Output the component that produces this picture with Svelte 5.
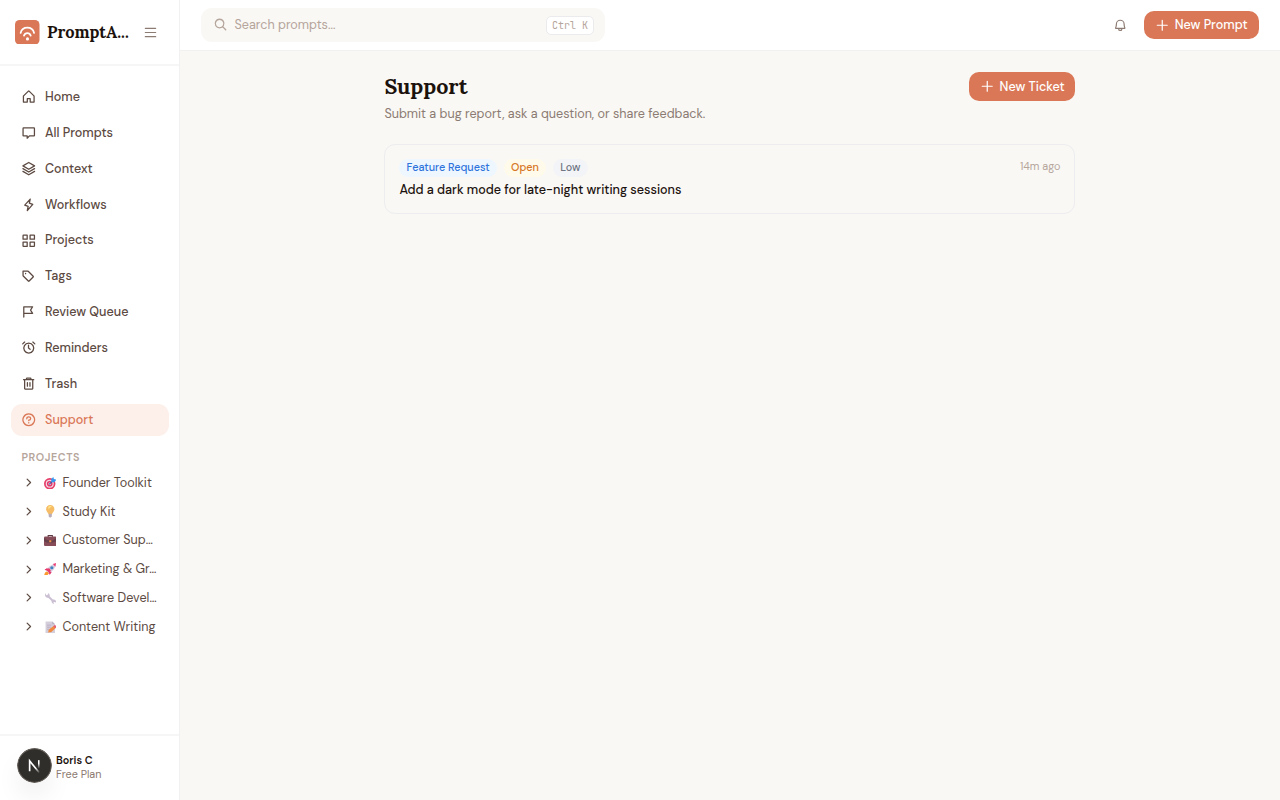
<script>
const nav = [
  { id: 'home', label: 'Home' },
  { id: 'prompts', label: 'All Prompts' },
  { id: 'context', label: 'Context' },
  { id: 'workflows', label: 'Workflows' },
  { id: 'projects', label: 'Projects' },
  { id: 'tags', label: 'Tags' },
  { id: 'review', label: 'Review Queue' },
  { id: 'reminders', label: 'Reminders' },
  { id: 'trash', label: 'Trash' },
  { id: 'support', label: 'Support' }
]

const projects = [
  { icon: 'target', name: 'Founder Toolkit' },
  { icon: 'bulb', name: 'Study Kit' },
  { icon: 'case', name: 'Customer Sup…' },
  { icon: 'rocket', name: 'Marketing & Gr…' },
  { icon: 'wrench', name: 'Software Devel…' },
  { icon: 'memo', name: 'Content Writing' }
]

// 256 grid
const icons = {
  home: 'M152 216v-56h-48v56H40v-96a8 8 0 0 1 2.3-5.7l80-80a8 8 0 0 1 11.4 0l80 80A8 8 0 0 1 216 120v96Z',
  prompts: 'M214 48H42a8 8 0 0 0-8 8v116a8 8 0 0 0 8 8h60v38l38-38h74a8 8 0 0 0 8-8V56a8 8 0 0 0-8-8Z',
  context: 'M32 80l96 56 96-56-96-56ZM32 126l96 56 96-56M32 172l96 56 96-56',
  workflows: 'M104 224l14-68-56-22L152 34l-14 66 56 22Z',
  projects: 'M42 34h60v68H34V42a8 8 0 0 1 8-8ZM150 34h64a8 8 0 0 1 8 8v60h-72ZM34 150h68v72H42a8 8 0 0 1-8-8ZM150 150h72v64a8 8 0 0 1-8 8h-64Z',
  tags: 'M36 34h76a10 10 0 0 1 7 3l82 82a10 10 0 0 1 0 14l-66 66a10 10 0 0 1-14 0l-84-84a10 10 0 0 1-3-7V36ZM76 74v4',
  review: 'M46 216V46h146l-34 54 34 54H46',
  reminders: 'M128 52a82 82 0 1 0 .1 0ZM124 84v50l26 20M60 34L28 64M196 34l32 30',
  trash: 'M210 60H42M106 108v60M148 108v60M194 60v148a8 8 0 0 1-8 8H68a8 8 0 0 1-8-8V60M164 56V46a10 10 0 0 0-10-10h-54a10 10 0 0 0-10 10v10',
  support: 'M128 32a96 96 0 1 0 .1 0ZM128 144v-8c17.7 0 32-12.5 32-28s-14.3-28-32-28-32 12.5-32 28v4M128 174v6',
  menu: 'M40 56h176M40 128h176M40 200h176',
  search: 'M116 40a76 76 0 1 0 .1 0ZM170 170l54 54',
  bell: 'M60 108a68 68 0 0 1 136 0c0 34 6 52 13 64a8 8 0 0 1-7 12H54a8 8 0 0 1-7-12c7-12 13-30 13-64ZM100 186v6a28 28 0 0 0 56 0v-6',
  plus: 'M40 128h176M128 40v176',
  chevron: 'M96 48l80 80-80 80'
}
</script>

{#snippet icon(name)}
  <svg class="icon icon-{name}" viewBox="0 0 256 256"><path d={icons[name]} /></svg>
{/snippet}

{#snippet emoji(name)}
  <svg class="emoji" viewBox="0 0 24 24">
    {#if name === 'target'}
      <circle cx="11" cy="13" r="11" fill="#e63e68" />
      <circle cx="11" cy="13" r="7.7" fill="#f3d8e4" />
      <circle cx="11" cy="13" r="5.4" fill="#df386a" />
      <circle cx="11" cy="13" r="2.5" fill="#f4dce5" />
      <path d="M10 14L19 5" stroke="#345aa5" stroke-width="2" />
      <path d="M14 9V4l4-4 1 4 5 1-4 5h-5Z" fill="#3898ee" />
    {:else if name === 'bulb'}
      <path d="M12 0C7 0 4 3.5 4 8c0 5 4 6 5 10h6c1-4 5-5 5-10 0-4.500-3-8-8-8Z" fill="#f6bd66" />
      <path d="M8 4c2-3 6-2 7 0-3 0-5 2-6 5Z" fill="#ffe58a" />
      <path d="M9 17h6v5l-2 2h-2l-2-2Z" fill="#b9adb8" />
    {:else if name === 'case'}
      <path d="M8 6V3h8v3" fill="none" stroke="#5d3944" stroke-width="2" />
      <rect x="0" y="5" width="24" height="18" rx="2" fill="#864c58" />
      <path d="M0 7q12 12 24 0v7q-12 6-24 0Z" fill="#66404b" />
      <rect x="10" y="12" width="4" height="4" rx="1" fill="#f39545" />
    {:else if name === 'rocket'}
      <path d="M7 9L1 13l5 2M15 17l-4 6-2-6" fill="#df2960" />
      <path d="M6 16l4 3-3 4-7 1 2-6Z" fill="#f99b32" />
      <path d="M5 15C7 8 13 3 22 2c0 8-5 14-13 17Z" fill="#d4cce0" />
      <path d="M17 2l6-2-1 7Z" fill="#ed3a6e" />
      <circle cx="15" cy="9" r="3" fill="#3f81bc" />
      <path d="M3 12l7-2 3 4-2 7-3-4Z" fill="#e83b6b" />
    {:else if name === 'wrench'}
      <path d="M7 7l11 11" stroke="#cbc0d3" stroke-width="4" />
      <path d="M3 2l1 4 4-1V2c4 2 4 7 0 9-4 1-8-3-5-9ZM16 15c4-2 8 1 7 5l-3-1-2 1 1 3c-4-1-6-5-3-8Z" fill="#cbc0d3" />
    {:else}
      <path d="M3 1h13l5 5v17H3Z" fill="#d4cdda" />
      <path d="M16 1v5h5" fill="#b7acc0" />
      <path d="M6 8h8M6 12h7M6 16h4" stroke="#b3a9bf" stroke-width="1.500" />
      <path d="M8 22l1-5 10-8 4 4-9 8Z" fill="#f18a40" />
      <path d="M18 10l3-3 3 4-2 3Z" fill="#e35e78" />
    {/if}
  </svg>
{/snippet}

<div class="app">
  <aside>
    <div class="brand">
      <svg class="logo" viewBox="0 0 24 24">
        <rect width="24" height="24" rx="4.500" fill="#da7756" />
        <path d="M5.500 12.700a6.800 6.800 0 0 1 13.200 0M8.800 15.300a3.500 3.500 0 0 1 6.600 0" fill="none" stroke="#fff" stroke-width="1.700" stroke-linecap="round" />
        <circle cx="12.200" cy="18.500" r="1.500" fill="#fff" />
      </svg>
      <strong>PromptA...</strong>
      <button class="plain" aria-label="Collapse">{@render icon('menu')}</button>
    </div>

    <nav>
      {#each nav as item}
        <a href="#{item.id}" class="item" class:active={item.id === 'support'}>
          {@render icon(item.id)}
          <span>{item.label}</span>
        </a>
      {/each}
    </nav>

    <div class="projects-list">
      <h2>PROJECTS</h2>
      {#each projects as project}
        <div class="project">
          {@render icon('chevron')}
          {@render emoji(project.icon)}
          <span>{project.name}</span>
        </div>
      {/each}
    </div>

    <div class="account">
      <svg class="avatar" viewBox="0 0 36 36">
        <defs>
          <linearGradient id="stem" x1="0" y1="0" x2="0" y2="1">
            <stop offset="0.400" stop-color="#fff" /><stop offset="1" stop-color="#fff" stop-opacity="0" />
          </linearGradient>
          <linearGradient id="slash" x1="0" y1="0" x2="1" y2="1">
            <stop offset="0.600" stop-color="#fff" /><stop offset="1" stop-color="#fff" stop-opacity="0.100" />
          </linearGradient>
        </defs>
        <circle cx="18" cy="18" r="17.300" fill="#302e2b" stroke="#625c56" stroke-width="1.200" />
        <path d="M13 24V13.300l9.800 12" fill="none" stroke="url(#slash)" stroke-width="1.700" />
        <rect x="21.600" y="12.500" width="1.600" height="8.500" fill="url(#stem)" />
      </svg>
      <div class="who">
        <b>Boris C</b>
        <span>Free Plan</span>
      </div>
    </div>
  </aside>

  <div class="page">
    <header>
      <div class="search">
        {@render icon('search')}
        <span>Search prompts...</span>
        <kbd>Ctrl K</kbd>
      </div>
      <button class="plain bell-btn" aria-label="Notifications">{@render icon('bell')}</button>
      <button class="primary">{@render icon('plus')}<span>New Prompt</span></button>
    </header>

    <main>
      <div class="heading">
        <div>
          <h1>Support</h1>
          <p>Submit a bug report, ask a question, or share feedback.</p>
        </div>
        <button class="primary ticket-btn">{@render icon('plus')}<span>New Ticket</span></button>
      </div>
      <article>
        <div class="meta">
          <span class="tag blue">Feature Request</span>
          <span class="tag amber">Open</span>
          <span class="tag grey">Low</span>
          <time>14m ago</time>
        </div>
        <h3>Add a dark mode for late-night writing sessions</h3>
      </article>
    </main>
  </div>
</div>

<style>
:global(body) {
  margin: 0;
  background: #f9f8f5;
}

.app {
  display: flex;
  height: 800px;
  overflow: hidden;
  font-family: 'DM Sans', Inter, 'Liberation Sans', sans-serif;
  font-size: 12.6px;
  color: #5c4a42;
}

.app * {
  box-sizing: border-box;
}

h1, h2, h3, p {
  margin: 0;
}

.icon {
  flex: none;
  width: 16px;
  height: 16px;
  fill: none;
  stroke: currentColor;
  stroke-width: 21;
  stroke-linecap: round;
  stroke-linejoin: round;
}

.plain {
  display: flex;
  padding: 0;
  border: 0;
  background: none;
  color: #8c7b72;
}

aside {
  display: flex;
  flex-direction: column;
  flex: none;
  width: 180px;
  background: #fff;
  border-right: 1px solid #f1f1f2;
}

.brand {
  display: flex;
  align-items: center;
  height: 66px;
  padding: 0 21px 0 15px;
  border-bottom: 2px solid #f6f6f7;
}

.logo {
  width: 24.500px;
  height: 24.500px;
}

.brand strong {
  width: 96px;
  margin-left: 7.500px;
  font: bold 16.400px 'Lora', 'Liberation Serif', serif;
  color: #1c120d;
}

.brand .plain {
  margin-left: auto;
}

.icon-menu {
  width: 15px;
  height: 15px;
}

nav {
  display: flex;
  flex-direction: column;
  gap: 3.600px;
  padding: 14.700px 10.500px 0 11px;
}

.item {
  display: flex;
  align-items: center;
  gap: 8.500px;
  height: 32.300px;
  padding-left: 9.500px;
  border-radius: 11px;
  color: inherit;
  font-weight: 500;
  text-decoration: none;
}

.item .icon {
  width: 15.500px;
  height: 15.500px;
  margin-right: 0.500px;
}

.item.active {
  background: #fdf0eb;
  color: #da7756;
}

.projects-list {
  padding: 14.400px 10px 0 21.500px;
}

h2 {
  height: 18px;
  font-size: 10.800px;
  line-height: 15px;
  font-weight: 600;
  letter-spacing: 0.540px;
  color: #b5a59b;
}

.project {
  display: flex;
  align-items: center;
  height: 28.800px;
}

.icon-chevron {
  width: 11px;
  height: 11px;
  margin: 0 9.500px 0 1.500px;
  stroke-width: 28;
}

.emoji {
  flex: none;
  width: 12.500px;
  height: 12.500px;
  margin-right: 6.400px;
}

.project span {
  white-space: nowrap;
}

.account {
  display: flex;
  align-items: center;
  gap: 4.500px;
  height: 66px;
  margin-top: auto;
  padding: 0 0 5px 16.500px;
  border-top: 2px solid #f6f6f7;
}

.avatar {
  width: 35px;
  height: 35px;
  border-radius: 50%;
  box-shadow: 0 14px 28px -6px #0002;
}

.who {
  display: flex;
  flex-direction: column;
  padding-top: 2px;
  font-size: 10.800px;
  line-height: 14px;
  color: #8c7b72;
}

.who b {
  font-weight: 600;
  color: #1c120d;
}

.page {
  flex: 1;
  background: #f9f8f5;
}

header {
  display: flex;
  align-items: center;
  height: 51px;
  padding: 0 21px 0;
  background: #fff;
  border-bottom: 1px solid #f1f1f2;
}

.search {
  display: flex;
  align-items: center;
  width: 403.500px;
  height: 34px;
  padding: 0 10.500px 0 12px;
  border-radius: 11px;
  background: #f9f8f5;
  color: #b5a59b;
}

.icon-search {
  width: 14.500px;
  height: 14.500px;
  margin: -1px 7.500px 0 -0.500px;
  stroke-width: 24;
}

kbd {
  width: 48px;
  height: 19px;
  margin-left: auto;
  border: 1px solid #ebebee;
  border-radius: 5px;
  background: #fff;
  font: 10px/17px 'JetBrains Mono', 'DejaVu Sans Mono', monospace;
  text-align: center;
}

.bell-btn {
  margin: 0 16.500px 0 auto;
}

.icon-bell {
  width: 14.500px;
  height: 14.500px;
}

.primary {
  display: flex;
  align-items: center;
  width: 115px;
  height: 28.500px;
  padding: 0 0 0 11px;
  border: 0;
  border-radius: 10px;
  background: #da7756;
  color: #fff;
  font: 500 12.600px 'DM Sans', Inter, sans-serif;
  white-space: nowrap;
}

.icon-plus {
  width: 14.500px;
  height: 14.500px;
  margin-right: 5.200px;
}

main {
  width: 691px;
  margin: 0 0 0 204.400px;
  padding-top: 21.400px;
}

.heading {
  display: flex;
  align-items: flex-start;
  justify-content: space-between;
  height: 72px;
}

h1 {
  font: bold 21.500px/29px 'Lora', 'Liberation Serif', serif;
  color: #1c120d;
}

.heading p {
  line-height: 26.500px;
  color: #8c7b72;
}

.ticket-btn {
  width: 106px;
  padding-left: 10.500px;
}

article {
  height: 70px;
  padding: 14px;
  border: 1px solid #ededf0;
  border-radius: 11px;
}

.meta {
  display: flex;
  gap: 7px;
}

.tag {
  height: 18px;
  padding: 0 7.200px;
  border-radius: 9px;
  font-size: 10.800px;
  line-height: 17px;
  font-weight: 500;
}

.blue {
  background: #eef7ff;
  color: #2f74dc;
}

.amber {
  background: #fffae9;
  color: #d67623;
}

.grey {
  background: #f3f4f7;
  color: #6e7583;
}

time {
  margin-left: auto;
  font-size: 10.800px;
  line-height: 15px;
  color: #b5a59b;
}

h3 {
  margin-top: 5px;
  font-size: 12.600px;
  line-height: 16px;
  font-weight: 500;
  color: #1c120d;
}
</style>
